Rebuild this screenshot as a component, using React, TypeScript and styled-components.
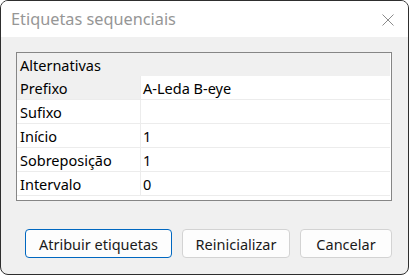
import React from 'react';
import styled, { createGlobalStyle } from 'styled-components';

const GlobalStyle = createGlobalStyle`
  html, body {
    margin: 0;
    padding: 0;
    background: #ffffff;
  }
  body {
    font-family: 'Noto Sans', 'Liberation Sans', sans-serif;
  }
`;

interface Field {
  label: string;
  value: string;
}

const fields: Field[] = [
  { label: 'Prefixo', value: 'A-Leda B-eye' },
  { label: 'Sufixo', value: '' },
  { label: 'Início', value: '1' },
  { label: 'Sobreposição', value: '1' },
  { label: 'Intervalo', value: '0' },
];

const CloseIcon = () => (
  <svg width="12" height="12" viewBox="0 0 12 12">
    <path d="M0.5 0.5 L11.5 11.5 M11.5 0.5 L0.5 11.5" stroke="#8b8b8b" strokeWidth="1" fill="none" />
  </svg>
);

const App = () => {
  const [selected] = React.useState<number>(0);

  return (
    <>
      <GlobalStyle />
      <Window>
        <TitleBar>
          <Title>Etiquetas sequenciais</Title>
          <CloseButton aria-label="Fechar">
            <CloseIcon />
          </CloseButton>
        </TitleBar>

        <Body>
          <Grid>
            <GroupRow>Alternativas</GroupRow>
            {fields.map((field, index) => (
              <Row key={field.label}>
                <LabelCell isSelected={index === selected}>{field.label}</LabelCell>
                <ValueCell>{field.value}</ValueCell>
              </Row>
            ))}
          </Grid>

          <Actions>
            <Button isDefault width={147}>Atribuir etiquetas</Button>
            <Button width={108}>Reinicializar</Button>
            <Button width={92}>Cancelar</Button>
          </Actions>
        </Body>
      </Window>
    </>
  );
};

const Window = styled.div`
  box-sizing: border-box;
  width: 409px;
  height: 275px;
  border: 1px solid #2e2e2e;
  border-radius: 8px;
  background: #f0f0f0;
  overflow: hidden;
  display: flex;
  flex-direction: column;
`;

const TitleBar = styled.div`
  height: 37px;
  background: #ffffff;
  display: flex;
  align-items: center;
  justify-content: space-between;
  padding: 0 14px 0 10px;
`;

const Title = styled.span`
  font-size: 16.3px;
  color: #969696;
  padding-bottom: 1px;
`;

const CloseButton = styled.button`
  background: transparent;
  border: none;
  padding: 0;
  display: flex;
  margin-top: 1px;
`;

const Body = styled.div`
  flex: 1;
  display: flex;
  flex-direction: column;
  padding: 15px 16px 16px 15px;
`;

const Grid = styled.div`
  box-sizing: border-box;
  height: 149px;
  border: 1px solid #868686;
  background: #ffffff;
  padding: 0 1px 0 0;
  display: flex;
  flex-direction: column;
  font-size: 14.5px;
  color: #000000;
`;

const GroupRow = styled.div`
  height: 23px;
  background: #f0f0f0;
  display: flex;
  align-items: center;
  padding-left: 3px;
`;

const Row = styled.div`
  height: 23px;
  display: grid;
  grid-template-columns: 124px 1fr;
  border-bottom: 1px solid #ececec;
`;

const LabelCell = styled.div<{ isSelected?: boolean }>`
  display: flex;
  align-items: center;
  padding-left: 3px;
  border-right: 1px solid #ececec;
  background: ${props => props.isSelected ? '#f0f0f0' : 'transparent'};
`;

const ValueCell = styled.div`
  display: flex;
  align-items: center;
  padding-left: 2px;
`;

const Actions = styled.div`
  margin-top: 28px;
  display: flex;
  justify-content: flex-end;
  gap: 10px;
`;

const Button = styled.button<{ isDefault?: boolean; width: number }>`
  box-sizing: border-box;
  width: ${props => props.width}px;
  height: 29px;
  padding: 0;
  border: 1px solid ${props => props.isDefault ? '#0067c0' : '#d3d3d3'};
  border-radius: 4px;
  background: #fdfdfd;
  font-family: 'Noto Sans', 'Liberation Sans', sans-serif;
  font-size: 14.5px;
  color: #1a1a1a;
`;

export default App;
